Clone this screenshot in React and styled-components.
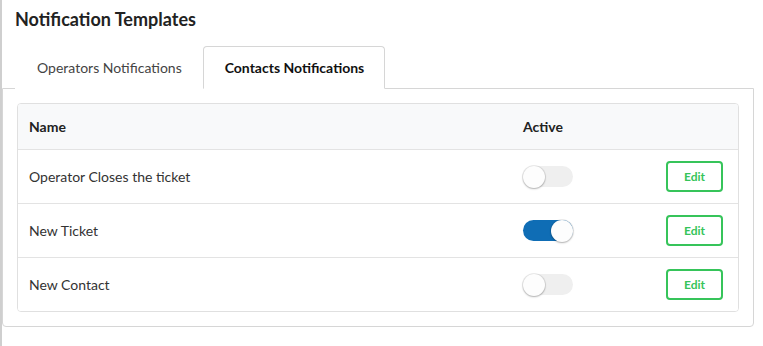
import React, { useState } from "react";
import styled, { createGlobalStyle } from "styled-components";

const GlobalStyle = createGlobalStyle`
  html, body {
    margin: 0;
    padding: 0;
    background: #ffffff;
  }
  body {
    font-family: Lato, "Open Sans", "Liberation Sans", sans-serif;
    color: #333333;
  }
`;

const Page = styled.div`
  display: flex;
  min-height: 346px;
  box-sizing: border-box;
  border-left: 2px solid #cfcfcf;
`;

const Main = styled.div`
  flex: 1;
  margin-right: 9px;
  display: flex;
  flex-direction: column;
`;

const Title = styled.h2`
  margin: 0;
  padding: 7px 0 0 13px;
  font-size: 18px;
  line-height: 24px;
  font-weight: 700;
  color: #222;
  height: 46px;
  box-sizing: border-box;
`;

const TabBar = styled.div`
  display: flex;
  padding-left: 13px;
`;

const Tab = styled.button`
  font-family: inherit;
  font-size: 14px;
  font-weight: ${(p) => (p.active ? 700 : 400)};
  color: ${(p) => (p.active ? "#111" : "#444")};
  background: #fff;
  height: 43px;
  padding: 0 20px 0 21px;
  margin-bottom: -1px;
  border: 1px solid ${(p) => (p.active ? "#d6d6d6" : "transparent")};
  border-bottom-color: ${(p) => (p.active ? "#fff" : "transparent")};
  border-radius: 4px 4px 0 0;
  cursor: pointer;
  position: relative;
  z-index: 1;
`;

const Panel = styled.div`
  border: 1px solid #d6d6d6;
  border-radius: 0 0 4px 4px;
  padding: 14px;
`;

const Table = styled.div`
  border: 1px solid #e0e0e0;
  border-radius: 4px;
  overflow: hidden;
`;

const Row = styled.div`
  display: grid;
  grid-template-columns: 1fr 130px 96px;
  align-items: center;
  height: ${(p) => (p.head ? 45 : 53)}px;
  background: ${(p) => (p.head ? "#f8f9fa" : "#fff")};
  & + & {
    border-top: 1px solid #e3e3e3;
  }
`;

const Cell = styled.div`
  padding: 0 12px 0 11px;
  font-size: 14px;
  font-weight: ${(p) => (p.head ? 700 : 400)};
  color: ${(p) => (p.head ? "#222" : "#333")};
  display: flex;
  justify-content: ${(p) => (p.end ? "flex-end" : "flex-start")};
  padding-right: ${(p) => (p.end ? 15 : 12)}px;
`;

const Track = styled.button`
  width: 50px;
  height: 21px;
  border: none;
  padding: 0;
  border-radius: 11px;
  background: ${(p) => (p.on ? "#0f6db5" : "#efefef")};
  position: relative;
  cursor: pointer;
`;

const Knob = styled.span`
  position: absolute;
  top: -0.5px;
  left: ${(p) => (p.on ? 28 : 0)}px;
  width: 22px;
  height: 22px;
  border-radius: 50%;
  background: #fdfdfd;
  box-shadow: 0 0 0 1px rgba(0, 0, 0, 0.08), 0 1px 2px rgba(0, 0, 0, 0.25);
`;

const EditButton = styled.button`
  font-family: inherit;
  width: 57px;
  height: 31px;
  border: 2px solid #36c45a;
  border-radius: 4px;
  background: #fff;
  color: #36c45a;
  font-size: 12px;
  font-weight: 700;
  cursor: pointer;
`;

const Toggle = ({ on, onClick }) => (
  <Track on={on} onClick={onClick}>
    <Knob on={on} />
  </Track>
);

const initial = [
  { name: "Operator Closes the ticket", active: false },
  { name: "New Ticket", active: true },
  { name: "New Contact", active: false },
];

export default function App() {
  const [tab, setTab] = useState(1);
  const [rows, setRows] = useState(initial);

  const flip = (index) =>
    setRows(rows.map((r, i) => (i === index ? { ...r, active: !r.active } : r)));

  return (
    <>
      <GlobalStyle />
      <Page>
        <Main>
          <Title>Notification Templates</Title>
          <TabBar>
            <Tab active={tab === 0} onClick={() => setTab(0)}>
              Operators Notifications
            </Tab>
            <Tab active={tab === 1} onClick={() => setTab(1)}>
              Contacts Notifications
            </Tab>
          </TabBar>
          <Panel>
            <Table>
              <Row head>
                <Cell head>Name</Cell>
                <Cell head>Active</Cell>
                <Cell />
              </Row>
              {rows.map((r, i) => (
                <Row key={r.name}>
                  <Cell>{r.name}</Cell>
                  <Cell>
                    <Toggle on={r.active} onClick={() => flip(i)} />
                  </Cell>
                  <Cell end>
                    <EditButton>Edit</EditButton>
                  </Cell>
                </Row>
              ))}
            </Table>
          </Panel>
        </Main>
      </Page>
    </>
  );
}
